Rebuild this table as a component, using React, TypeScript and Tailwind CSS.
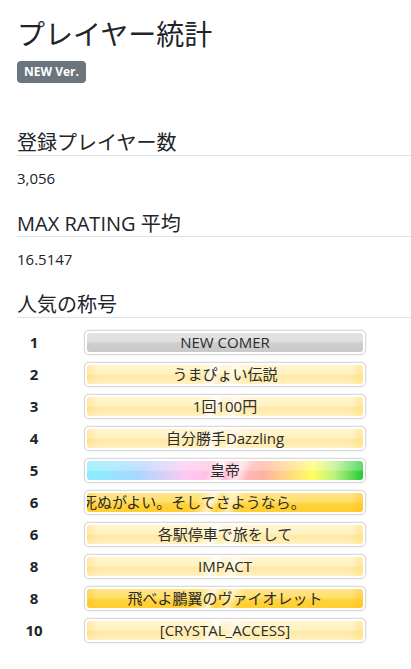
import React from "react";

type Kind = "gray" | "gold" | "goldStrong" | "rainbow";

interface ITitle {
  rank: number;
  name: string;
  kind: Kind;
  shift?: boolean;
}

const titles: ITitle[] = [
  { rank: 1, name: "NEW COMER", kind: "gray" },
  { rank: 2, name: "うまぴょい伝説", kind: "gold" },
  { rank: 3, name: "1回100円", kind: "gold" },
  { rank: 4, name: "自分勝手Dazzling", kind: "gold" },
  { rank: 5, name: "皇帝", kind: "rainbow" },
  { rank: 6, name: "死ぬがよい。そしてさようなら。", kind: "goldStrong", shift: true },
  { rank: 6, name: "各駅停車で旅をして", kind: "gold" },
  { rank: 8, name: "IMPACT", kind: "gold" },
  { rank: 8, name: "飛べよ鵬翼のヴァイオレット", kind: "goldStrong" },
  { rank: 10, name: "[CRYSTAL_ACCESS]", kind: "gold" },
];

const kindClass: Record<Kind, string> = {
  gray: "bg-[linear-gradient(180deg,#e3e3e3_0%,#dedede_46%,#cecece_52%,#c9c9c9_100%)]",
  gold: "bg-[linear-gradient(112deg,transparent_42%,rgba(255,255,255,0.75)_46%,transparent_49%,rgba(255,255,255,0.6)_53%,transparent_57%),linear-gradient(90deg,rgba(255,214,80,0.35)_0%,transparent_4%,transparent_95%,rgba(255,214,80,0.35)_100%),linear-gradient(180deg,#fff6d3_0%,#fff2c2_45%,#ffe8a2_58%,#fff1c2_100%)]",
  goldStrong:
    "bg-[linear-gradient(112deg,transparent_40%,rgba(255,255,255,0.7)_45%,transparent_48%,rgba(255,255,255,0.55)_52%,transparent_56%),linear-gradient(90deg,rgba(255,190,20,0.4)_0%,transparent_4%,transparent_95%,rgba(255,190,20,0.4)_100%),linear-gradient(180deg,#ffe68a_0%,#ffdf6c_45%,#ffd23c_58%,#ffcf2e_100%)]",
  rainbow:
    "bg-[linear-gradient(112deg,transparent_44%,rgba(255,255,255,0.7)_48%,transparent_51%,rgba(255,255,255,0.6)_55%,transparent_59%),linear-gradient(180deg,rgba(255,255,255,0.3)_0%,rgba(255,255,255,0.25)_48%,transparent_55%),linear-gradient(90deg,#88eeff_0%,#a8d8ff_18%,#ffc8f2_36%,#ffbcd8_50%,#ffb2a2_64%,#ffff62_82%,#b8f080_90%,#22cc33_100%)]",
};

function TitleBadge({ item }: { item: ITitle }) {
  return (
    <div className="w-[282px] h-[25px] rounded-[5px] border border-[#d8d8d8] bg-white p-[2px] shadow-[0_0_2px_rgba(0,0,0,0.12)]">
      <div
        className={`h-full rounded-[3px] overflow-hidden flex items-center whitespace-nowrap text-[15px] leading-none text-[#2b2b2b] ${
          item.shift ? "justify-start" : "justify-center"
        } ${kindClass[item.kind]}`}
      >
        <span className={item.shift ? "-ml-[5px]" : ""}>{item.name}</span>
      </div>
    </div>
  );
}

function Section({ label, value }: { label: string; value: string }) {
  return (
    <div>
      <h4 className="text-[20px] leading-[24px] border-b border-[#dee2e6]">{label}</h4>
      <p className="mt-[11px] text-[15px] leading-[22px]">{value}</p>
    </div>
  );
}

export default function App() {
  return (
    <div
      className="w-[411px] min-h-[669px] bg-white text-[#212529] pl-[17px] pb-6"
      style={{ fontFamily: '"Open Sans", "Noto Sans CJK JP", sans-serif' }}
    >
      <h2 className="pt-[17px] text-[28px] leading-[34px]">プレイヤー統計</h2>
      <span className="inline-block mt-[10px] h-[22px] px-[7px] rounded-[4px] bg-[#6c757d] text-white text-[12px] font-bold leading-[22px]">
        NEW Ver.
      </span>

      <div className="mt-[48px] flex flex-col gap-[23px]">
        <Section label="登録プレイヤー数" value="3,056" />
        <Section label="MAX RATING 平均" value="16.5147" />
        <h4 className="text-[20px] leading-[24px] border-b border-[#dee2e6]">人気の称号</h4>
      </div>

      <div className="mt-2 flex flex-col">
        {titles.map((t, i) => (
          <div key={i} className="h-[32px] flex items-center">
            <span className="w-[34px] text-center text-[15px] font-bold">{t.rank}</span>
            <div className="ml-[33px]">
              <TitleBadge item={t} />
            </div>
          </div>
        ))}
      </div>
    </div>
  );
}
